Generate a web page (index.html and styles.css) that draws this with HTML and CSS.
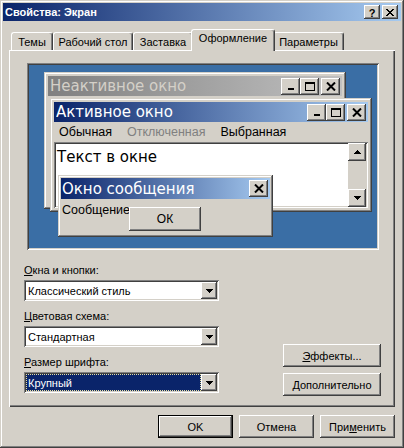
FILE: index.html
```html
<!DOCTYPE html>
<html lang="ru">
<head>
<meta charset="utf-8">
<title>Свойства: Экран</title>
<link rel="stylesheet" href="styles.css">
</head>
<body>
<div class="window">
  <div class="titlebar">
    <span class="title">Свойства: Экран</span>
    <div class="capbtns">
      <button class="capbtn help">?</button>
      <button class="capbtn"><svg width="8" height="7" viewBox="0 0 8 7"><path d="M0 0h2v1H0zM6 0h2v1H6zM1 1h2v1H1zM5 1h2v1H5zM2 2h4v1H2zM3 3h2v1H3zM2 4h4v1H2zM1 5h2v1H1zM5 5h2v1H5zM0 6h2v1H0zM6 6h2v1H6z"/></svg></button>
    </div>
  </div>

  <div class="tabs">
    <div class="tab t1">Темы</div>
    <div class="tab t2">Рабочий стол</div>
    <div class="tab t3">Заставка</div>
    <div class="tab t4 sel">Оформление</div>
    <div class="tab t5">Параметры</div>
  </div>

  <div class="panel">
    <div class="preview">
      <div class="pw inactive">
        <div class="pcap pcap-in">
          <span class="ptitle">Неактивное окно</span>
          <div class="pbtns">
            <b class="pbtn"><svg width="10" height="9" viewBox="0 0 10 9"><path d="M2 6h6v2H2z"/></svg></b>
            <b class="pbtn"><svg width="10" height="9" viewBox="0 0 10 9"><path fill-rule="evenodd" d="M0 0h10v9H0zM1 2h8v6H1z"/></svg></b>
            <b class="pbtn pclose"><svg width="10" height="9" viewBox="0 0 10 9"><path d="M1 0.5L9 8.5M9 0.5L1 8.5" stroke="#000" stroke-width="2"/></svg></b>
          </div>
        </div>
      </div>

      <div class="pw active">
        <div class="pcap">
          <span class="ptitle">Активное окно</span>
          <div class="pbtns">
            <b class="pbtn"><svg width="10" height="9" viewBox="0 0 10 9"><path d="M2 6h6v2H2z"/></svg></b>
            <b class="pbtn"><svg width="10" height="9" viewBox="0 0 10 9"><path fill-rule="evenodd" d="M0 0h10v9H0zM1 2h8v6H1z"/></svg></b>
            <b class="pbtn pclose"><svg width="10" height="9" viewBox="0 0 10 9"><path d="M1 0.5L9 8.5M9 0.5L1 8.5" stroke="#000" stroke-width="2"/></svg></b>
          </div>
        </div>
        <div class="menubar">
          <span class="mi">Обычная</span>
          <span class="mi dis">Отключенная</span>
          <span class="mi">Выбранная</span>
        </div>
        <div class="textarea">
          <span class="wtext">Текст в окне</span>
          <div class="vscroll">
            <b class="sbtn"><svg width="7" height="4" viewBox="0 0 7 4"><path d="M3 0h1v1H3zM2 1h3v1H2zM1 2h5v1H1zM0 3h7v1H0z"/></svg></b>
            <b class="sbtn"><svg width="7" height="4" viewBox="0 0 7 4"><path d="M0 0h7v1H0zM1 1h5v1H1zM2 2h3v1H2zM3 3h1v1H3z"/></svg></b>
          </div>
        </div>
      </div>

      <div class="pw msgbox">
        <div class="pcap">
          <span class="ptitle">Окно сообщения</span>
          <div class="pbtns">
            <b class="pbtn pclose"><svg width="10" height="9" viewBox="0 0 10 9"><path d="M1 0.5L9 8.5M9 0.5L1 8.5" stroke="#000" stroke-width="2"/></svg></b>
          </div>
        </div>
        <div class="msgbody">Сообщение</div>
        <b class="msgok">ОК</b>
      </div>
    </div>

    <div class="controls">
      <div class="fields">
        <div class="field">
          <div class="label"><u>О</u>кна и кнопки:</div>
          <div class="combo">
            <span class="cval">Классический стиль</span>
            <b class="cbtn"><svg width="7" height="4" viewBox="0 0 7 4"><path d="M0 0h7v1H0zM1 1h5v1H1zM2 2h3v1H2zM3 3h1v1H3z"/></svg></b>
          </div>
        </div>
        <div class="field">
          <div class="label"><u>Ц</u>ветовая схема:</div>
          <div class="combo">
            <span class="cval">Стандартная</span>
            <b class="cbtn"><svg width="7" height="4" viewBox="0 0 7 4"><path d="M0 0h7v1H0zM1 1h5v1H1zM2 2h3v1H2zM3 3h1v1H3z"/></svg></b>
          </div>
        </div>
        <div class="field">
          <div class="label"><u>Р</u>азмер шрифта:</div>
          <div class="combo">
            <span class="cval focus">Крупный</span>
            <b class="cbtn"><svg width="7" height="4" viewBox="0 0 7 4"><path d="M0 0h7v1H0zM1 1h5v1H1zM2 2h3v1H2zM3 3h1v1H3z"/></svg></b>
          </div>
        </div>
      </div>
      <div class="sidebtns">
        <button class="btn wide"><u>Э</u>ффекты...</button>
        <button class="btn wide"><u>Д</u>ополнительно</button>
      </div>
    </div>
  </div>

  <div class="footer">
    <button class="btn default">OK</button>
    <button class="btn">Отмена</button>
    <button class="btn">При<u>м</u>енить</button>
  </div>
</div>
</body>
</html>
```

FILE: styles.css
```css
* { box-sizing: border-box; }

html, body {
  margin: 0;
  padding: 0;
  background: #D4D0C8;
}

body {
  font: 11px "Liberation Sans", Arial, sans-serif;
  color: #000;
}

svg { display: block; shape-rendering: crispEdges; }

.window {
  width: 404px;
  height: 448px;
  padding: 3px;
  background: #D4D0C8;
  box-shadow: inset -1px -1px #404040, inset 1px 1px #D4D0C8, inset -2px -2px #808080, inset 2px 2px #fff;
}

/* ---- title bar ---- */
.titlebar {
  height: 18px;
  display: flex;
  align-items: center;
  padding-left: 2px;
  background: linear-gradient(to right, #0A246A, #A6CAF0);
}

.title {
  flex: 1;
  color: #fff;
  font-weight: bold;
  font-size: 11px;
}

.capbtns {
  display: flex;
  gap: 2px;
  margin-right: 3px;
}

.capbtn {
  width: 16px;
  height: 14px;
  padding: 0;
  border: 0;
  margin: 0;
  background: #D4D0C8;
  display: flex;
  align-items: center;
  justify-content: center;
  font: bold 11px "Liberation Sans", Arial, sans-serif;
  color: #000;
  box-shadow: inset -1px -1px #404040, inset 1px 1px #fff, inset -2px -2px #808080, inset 2px 2px #D4D0C8;
}

.capbtn.help { padding-top: 1px; }

/* ---- tabs ---- */
.tabs {
  height: 29px;
  display: flex;
  align-items: flex-end;
  padding-left: 8px;
}

.tab {
  height: 18px;
  padding-top: 2px;
  line-height: 14px;
  text-align: center;
  white-space: nowrap;
  border-top: 1px solid #fff;
  border-left: 1px solid #fff;
  border-right: 1px solid #404040;
  border-radius: 3px 3px 0 0;
  box-shadow: inset -1px 0 #808080;
}

.t1 { width: 42px; }
.t2 { width: 80px; }
.t3 { width: 60px; }
.t4 { width: 80px; }
.t5 { width: 71px; }

.tab.sel {
  width: 84px;
  height: 22px;
  margin: 0 -2px -1px;
  padding-top: 1px;
  position: relative;
  z-index: 2;
  background: #D4D0C8;
}

/* ---- panel ---- */
.panel {
  position: relative;
  margin-left: 6px;
  width: 386px;
  height: 357px;
  padding: 13px 14px 0 15px;
  box-shadow: inset 1px 1px #fff, inset -1px -1px #404040, inset -2px -2px #808080;
}

.preview {
  position: relative;
  margin-left: 3px;
  width: 352px;
  height: 187px;
  background: #3A6EA5;
  box-shadow: inset 1px 1px #808080, inset -1px -1px #fff, inset 2px 2px #404040, inset -2px -2px #D4D0C8;
}

.pw {
  position: absolute;
  display: flex;
  flex-direction: column;
  padding: 4px;
  background: #D4D0C8;
  box-shadow: inset -1px -1px #404040, inset 1px 1px #D4D0C8, inset -2px -2px #808080, inset 2px 2px #fff;
}

.inactive { left: 17px; top: 9px; width: 302px; height: 137px; }
.active { left: 23px; top: 35px; width: 322px; height: 114px; }
.msgbox { left: 31px; top: 112px; width: 215px; height: 62px; padding: 3px; }

.pcap {
  height: 20px;
  flex: none;
  display: flex;
  align-items: center;
  padding-left: 2px;
  background: linear-gradient(to right, #0A246A, #A6CAF0);
}

.msgbox .pcap { height: 21px; padding-left: 1px; }

.pcap-in { background: linear-gradient(to right, #808080, #C0C0C0); }

.ptitle {
  flex: 1;
  color: #fff;
  font: 15px "DejaVu Sans", Verdana, sans-serif;
  white-space: nowrap;
  overflow: hidden;
}

.pcap-in .ptitle { color: #D4D0C8; }

.pbtns {
  display: flex;
  margin-right: 2px;
}

.pbtn {
  width: 19px;
  height: 17px;
  display: flex;
  align-items: center;
  justify-content: center;
  background: #D4D0C8;
  box-shadow: inset -1px -1px #404040, inset 1px 1px #fff, inset -2px -2px #808080, inset 2px 2px #D4D0C8;
}

.pbtn.pclose { margin-left: 2px; }
.msgbox .pbtn.pclose { margin-left: 0; }

.pbtn svg { shape-rendering: auto; }

.menubar {
  height: 20px;
  flex: none;
  display: flex;
  align-items: center;
  gap: 15px;
  padding-left: 5px;
  font-size: 12.5px;
}

.mi.dis { color: #808080; }

.textarea {
  position: relative;
  flex: 1;
  background: #fff;
  padding: 6px 0 0 3px;
  box-shadow: inset 1px 1px #808080, inset -1px -1px #fff, inset 2px 2px #404040, inset -2px -2px #D4D0C8;
}

.wtext {
  font: 15px "DejaVu Sans", Verdana, sans-serif;
}

.vscroll {
  position: absolute;
  right: 2px;
  top: 1px;
  bottom: 1px;
  width: 18px;
  display: flex;
  flex-direction: column;
  justify-content: space-between;
  background: #D4D0C8;
}

.sbtn {
  width: 18px;
  height: 18px;
  display: flex;
  align-items: center;
  justify-content: center;
  background: #D4D0C8;
  box-shadow: inset -1px -1px #404040, inset 1px 1px #fff, inset -2px -2px #808080, inset 2px 2px #D4D0C8;
}

.msgbody {
  padding: 4px 0 0 1px;
  font-size: 12.5px;
  line-height: 15px;
}

.msgok {
  position: absolute;
  left: 71px;
  top: 32px;
  width: 72px;
  height: 24px;
  display: flex;
  align-items: center;
  justify-content: center;
  font-weight: normal;
  font-size: 12px;
  background: #D4D0C8;
  box-shadow: inset -1px -1px #404040, inset 1px 1px #fff, inset -2px -2px #808080, inset 2px 2px #D4D0C8;
}

/* ---- controls below preview ---- */
.controls {
  display: flex;
  align-items: flex-start;
  margin-top: 14px;
}

.fields {
  width: 195px;
  display: flex;
  flex-direction: column;
  gap: 9px;
}

.label {
  height: 13px;
  line-height: 13px;
  margin-bottom: 3px;
  white-space: nowrap;
}

.combo {
  height: 21px;
  padding: 2px;
  display: flex;
  background: #fff;
  box-shadow: inset 1px 1px #808080, inset -1px -1px #fff, inset 2px 2px #404040, inset -2px -2px #D4D0C8;
}

.cval {
  flex: 1;
  display: flex;
  align-items: center;
  padding-left: 2px;
  white-space: nowrap;
}

.cval.focus {
  background: #0A246A;
  color: #fff;
  outline: 1px dotted #E8E0A0;
  outline-offset: -1px;
}

.cbtn {
  width: 16px;
  height: 17px;
  display: flex;
  align-items: center;
  justify-content: center;
  background: #D4D0C8;
  box-shadow: inset -1px -1px #404040, inset 1px 1px #fff, inset -2px -2px #808080, inset 2px 2px #D4D0C8;
}

.sidebtns {
  margin-left: auto;
  margin-top: 80px;
  display: flex;
  flex-direction: column;
  gap: 6px;
}

.btn {
  width: 75px;
  height: 23px;
  padding: 0;
  margin: 0;
  border: 0;
  background: #D4D0C8;
  font: 11px "Liberation Sans", Arial, sans-serif;
  color: #000;
  display: flex;
  align-items: center;
  justify-content: center;
  box-shadow: inset -1px -1px #404040, inset 1px 1px #fff, inset -2px -2px #808080, inset 2px 2px #D4D0C8;
}

.btn.wide { width: 98px; }

.btn.default {
  box-shadow: inset 0 0 0 1px #000, inset -2px -2px #404040, inset 2px 2px #fff, inset -3px -3px #808080;
}

/* ---- footer ---- */
.footer {
  display: flex;
  justify-content: flex-end;
  gap: 6px;
  margin-top: 8px;
  padding-right: 6px;
}
```
